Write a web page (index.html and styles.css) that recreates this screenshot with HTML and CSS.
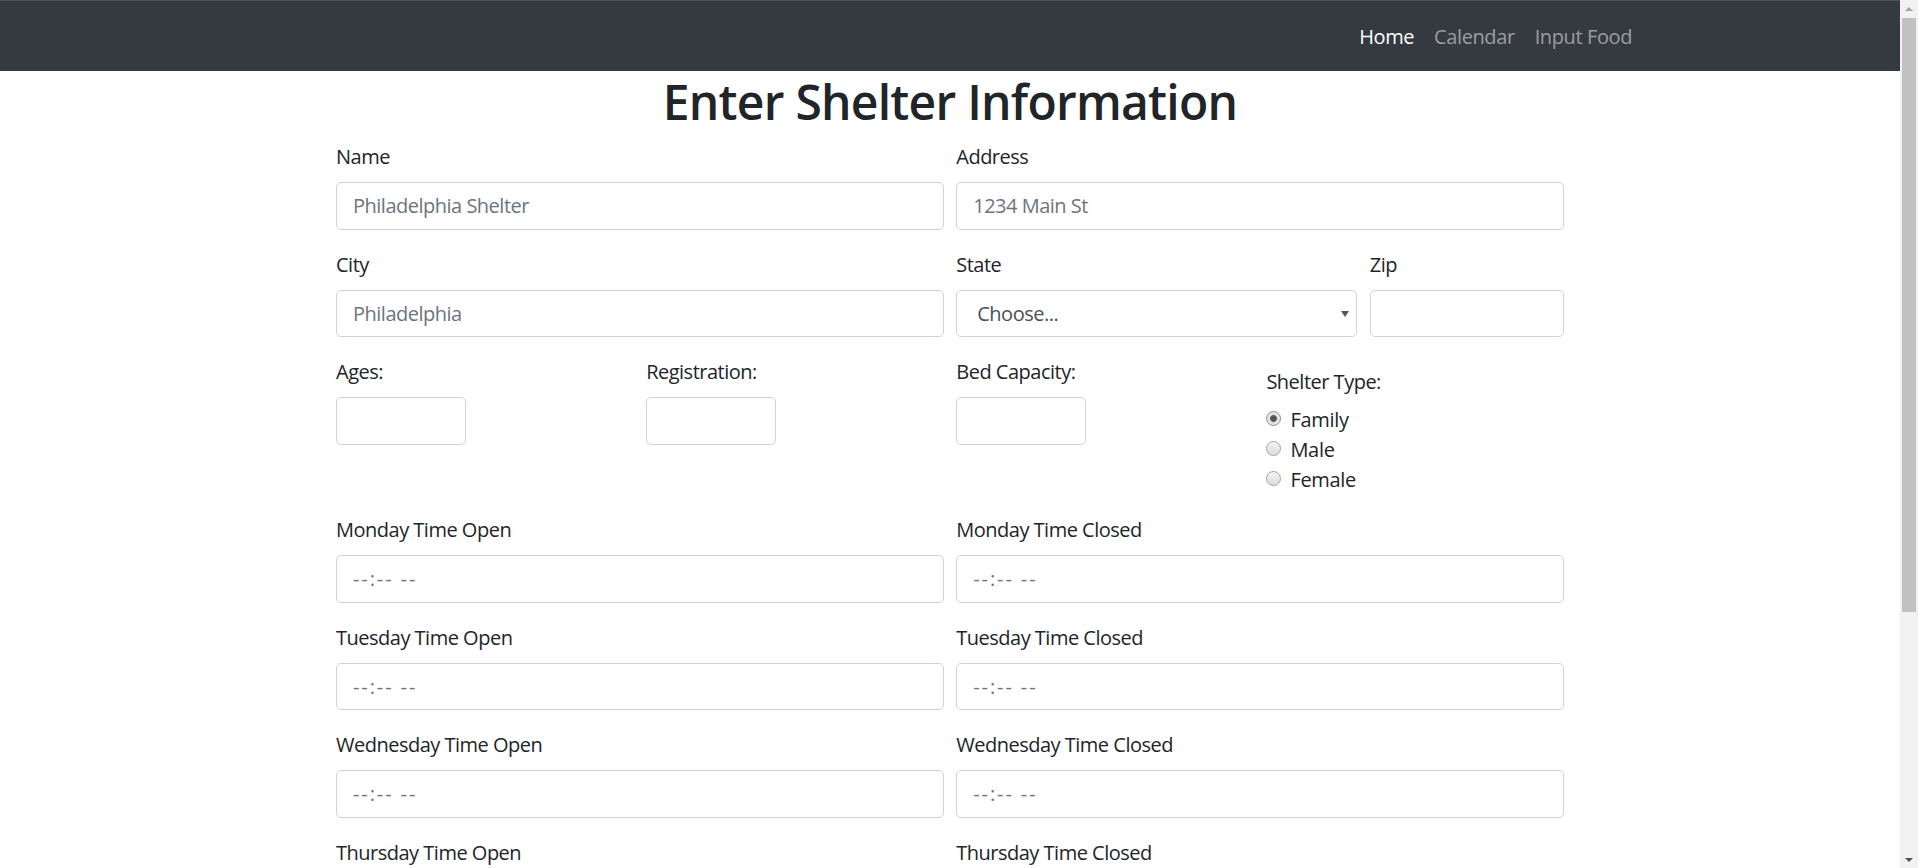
FILE: index.html
```html
<!DOCTYPE html>
<html lang="en">
<head>
<meta charset="utf-8">
<title>Enter Shelter Information</title>
<link rel="stylesheet" href="styles.css">
</head>
<body>
<div class="page">
  <div class="main">
    <nav class="navbar">
      <div class="nav-inner">
        <a class="nav-link active" href="#">Home</a>
        <a class="nav-link" href="#">Calendar</a>
        <a class="nav-link" href="#">Input Food</a>
      </div>
    </nav>
    <h1 class="title">Enter Shelter Information</h1>
    <form class="form">
      <div class="grid">
        <div class="group span6">
          <label class="label">Name</label>
          <input class="control" type="text" placeholder="Philadelphia Shelter">
        </div>
        <div class="group span6">
          <label class="label">Address</label>
          <input class="control" type="text" placeholder="1234 Main St">
        </div>

        <div class="group span6">
          <label class="label">City</label>
          <input class="control" type="text" placeholder="Philadelphia">
        </div>
        <div class="group span4">
          <label class="label">State</label>
          <div class="select-wrap">
            <select class="control select"><option>Choose...</option></select>
          </div>
        </div>
        <div class="group span2">
          <label class="label">Zip</label>
          <input class="control" type="text">
        </div>

        <div class="group span3">
          <label class="label">Ages:</label>
          <input class="control small" type="text">
        </div>
        <div class="group span3">
          <label class="label">Registration:</label>
          <input class="control small" type="text">
        </div>
        <div class="group span3">
          <label class="label">Bed Capacity:</label>
          <input class="control small" type="text">
        </div>
        <div class="group span3 shelter-type">
          <div class="label type-label">Shelter Type:</div>
          <label class="check"><input class="radio" type="radio" name="type" checked><span>Family</span></label>
          <label class="check"><input class="radio" type="radio" name="type"><span>Male</span></label>
          <label class="check"><input class="radio" type="radio" name="type"><span>Female</span></label>
        </div>

        <div class="group span6"><label class="label">Monday Time Open</label><input class="control time" type="text" placeholder="--:-- --"></div>
        <div class="group span6"><label class="label">Monday Time Closed</label><input class="control time" type="text" placeholder="--:-- --"></div>
        <div class="group span6"><label class="label">Tuesday Time Open</label><input class="control time" type="text" placeholder="--:-- --"></div>
        <div class="group span6"><label class="label">Tuesday Time Closed</label><input class="control time" type="text" placeholder="--:-- --"></div>
        <div class="group span6"><label class="label">Wednesday Time Open</label><input class="control time" type="text" placeholder="--:-- --"></div>
        <div class="group span6"><label class="label">Wednesday Time Closed</label><input class="control time" type="text" placeholder="--:-- --"></div>
        <div class="group span6"><label class="label">Thursday Time Open</label></div>
        <div class="group span6"><label class="label">Thursday Time Closed</label></div>
      </div>
    </form>
  </div>
  <div class="scrollbar">
    <div class="sb-btn"><span class="sb-up"></span></div>
    <div class="sb-track"><div class="sb-thumb"></div></div>
    <div class="sb-btn"><span class="sb-down"></span></div>
  </div>
</div>
</body>
</html>
```

FILE: styles.css
```css
html, body {
  margin: 0;
  padding: 0;
  height: 868px;
  overflow: hidden;
  background: #fff;
}

body {
  font-family: "Open Sans", "Noto Sans", sans-serif;
  color: #212529;
}

.page {
  display: flex;
  height: 868px;
}

.main {
  flex: 1;
  min-width: 0;
  overflow: hidden;
}

.navbar {
  height: 70px;
  border-top: 1px solid #4b5056;
  background: #343a40;
}

.nav-inner {
  width: 1384px;
  height: 100%;
  margin: 0 auto;
  display: flex;
  justify-content: flex-end;
  align-items: center;
}

.nav-link {
  padding: 2px 10px 0;
  font-size: 20px;
  line-height: 30px;
  letter-spacing: -0.4px;
  color: rgba(255, 255, 255, 0.5);
  text-decoration: none;
}

.nav-link.active {
  color: #fff;
}

.title {
  margin: 1px 0 10px;
  font-size: 48px;
  line-height: 60px;
  font-weight: 600;
  letter-spacing: -0.75px;
  text-align: center;
}

.form {
  width: 1228px;
  margin: 0 auto;
}

.grid {
  display: grid;
  grid-template-columns: repeat(12, 1fr);
  column-gap: 12.5px;
}

.span2 { grid-column: span 2; }
.span3 { grid-column: span 3; }
.span4 { grid-column: span 4; }
.span6 { grid-column: span 6; }

.group {
  margin-bottom: 20px;
}

.label {
  display: block;
  font-size: 20px;
  line-height: 30px;
  letter-spacing: -0.5px;
  margin-bottom: 10px;
}

.control {
  display: block;
  box-sizing: border-box;
  width: 100%;
  height: 47.5px;
  padding: 0 16px;
  border: 1px solid #ced4da;
  border-radius: 5px;
  background: #fff;
  font-family: inherit;
  font-size: 20px;
  letter-spacing: -0.5px;
  color: #495057;
  outline: none;
}

.control::placeholder {
  color: #6c757d;
  opacity: 1;
}

.control.time {
  letter-spacing: 1.9px;
}

.control.small {
  width: 130px;
}

.select-wrap {
  position: relative;
}

.select {
  appearance: none;
  -webkit-appearance: none;
  padding-left: 20px;
  color: #495057;
}

.select-wrap::after {
  content: "";
  position: absolute;
  right: 8px;
  top: 21px;
  border-left: 4px solid transparent;
  border-right: 4px solid transparent;
  border-top: 6px solid #555;
}

.shelter-type {
  margin-top: 10px;
}

.type-label {
  margin-bottom: 8px;
}

.check {
  display: flex;
  align-items: center;
  gap: 9px;
  font-size: 20px;
  line-height: 30px;
  letter-spacing: -0.3px;
}

.radio {
  appearance: none;
  -webkit-appearance: none;
  box-sizing: border-box;
  flex: none;
  width: 15px;
  height: 15px;
  margin: -4px 0 0 0;
  border: 1px solid #a3a3a3;
  border-radius: 50%;
  background: linear-gradient(#f4f4f4, #dcdcdc);
}

.radio:checked {
  background: radial-gradient(circle, #4d4d4d 0, #5a5a5a 3px, #dedede 3.8px, #f4f4f4 100%);
  border-color: #8c8c8c;
}

.scrollbar {
  width: 18px;
  height: 868px;
  background: #f1f1f1;
  display: flex;
  flex-direction: column;
}

.sb-btn {
  height: 17px;
  display: flex;
  align-items: center;
  justify-content: center;
}

.sb-up {
  border-left: 4px solid transparent;
  border-right: 4px solid transparent;
  border-bottom: 4px solid #a3a3a3;
}

.sb-down {
  border-left: 4px solid transparent;
  border-right: 4px solid transparent;
  border-top: 4px solid #505050;
}

.sb-track {
  flex: 1;
  padding: 1px 2px;
}

.sb-thumb {
  height: 594px;
  background: #c1c1c1;
}
```
